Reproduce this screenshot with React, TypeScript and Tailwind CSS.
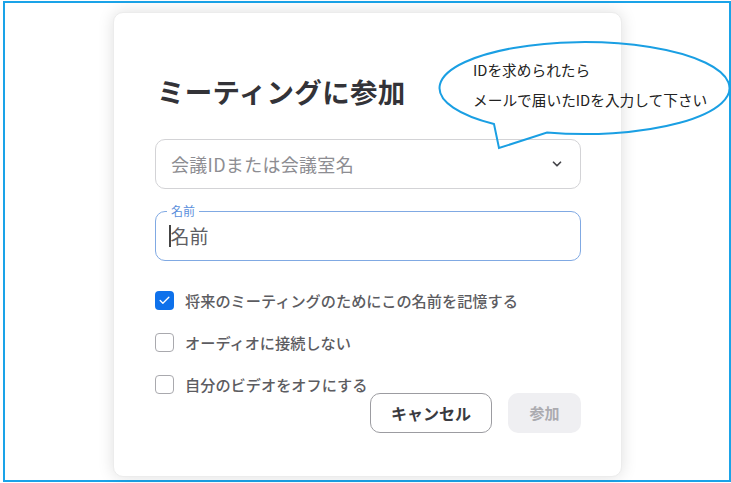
import { ChevronDown, Check } from "lucide-react"

const options = [
  { label: "将来のミーティングのためにこの名前を記憶する", checked: true },
  { label: "オーディオに接続しない", checked: false },
  { label: "自分のビデオをオフにする", checked: false },
]

export default function App() {
  return (
    <div
      className="relative w-[731px] h-[483px] bg-white overflow-hidden"
      style={{ fontFamily: '"Noto Sans CJK JP", "Noto Sans", sans-serif' }}
    >
      {/* blue frame around the screenshot */}
      <div className="ml-[3px] mt-[1px] w-[728px] h-[481px] border-2 border-[#1aa3e8] flex">
        {/* join dialog */}
        <div className="ml-[108px] mt-[9px] w-[509px] h-[465px] rounded-[10px] bg-white shadow-[0_0_16px_rgba(0,0,0,0.13)] border border-[#ececec] pl-[41px] pr-[40px] pt-[62px] flex flex-col">
          <h1 className="ml-[2px] text-[27.5px] leading-[32px] font-bold text-[#333338] tracking-[0.3px]">
            ミーティングに参加
          </h1>

          <div className="mt-[32px] h-[50px] rounded-[10px] border border-[#d3d3d6] flex items-center justify-between pl-[15px] pr-[16px]">
            <span className="text-[18px] tracking-[0.3px] text-[#8d8d92]">会議IDまたは会議室名</span>
            <ChevronDown size={14} strokeWidth={3} className="text-[#45454a]" />
          </div>

          <div className="relative mt-[22px] h-[50px] rounded-[10px] border-[1.5px] border-[#80a9e3] flex items-center pl-[13px]">
            <span className="absolute left-[11px] -top-[9px] bg-white px-[4px] text-[12px] leading-[16px] text-[#5b8fdc]">
              名前
            </span>
            <span className="w-[1.5px] h-[22px] bg-[#444]" />
            <span className="text-[19px] text-[#5e5e63]">名前</span>
          </div>

          <div className="mt-[29px] flex flex-col gap-[22px]">
            {options.map((o) => (
              <div key={o.label} className="h-[20px] flex items-center gap-[11px]">
                {o.checked ? (
                  <span className="w-[19px] h-[19px] rounded-[4px] bg-[#0e71eb] flex items-center justify-center">
                    <Check size={13} strokeWidth={2.5} className="text-white" />
                  </span>
                ) : (
                  <span className="w-[19px] h-[19px] rounded-[4px] border-[1.5px] border-[#a9a9ae] bg-white" />
                )}
                <span className="text-[15.2px] font-medium text-[#5c5c61]">{o.label}</span>
              </div>
            ))}
          </div>

          <div className="mt-[-1px] flex justify-end gap-[16px]">
            <button className="w-[122px] h-[40px] rounded-[10px] border-[1.5px] border-[#9c9ca1] bg-white text-[16px] font-bold text-[#3a3a3f]">
              キャンセル
            </button>
            <button className="w-[73px] h-[40px] rounded-[10px] bg-[#efeff2] text-[15px] font-bold text-[#ababb0]">
              参加
            </button>
          </div>
        </div>
      </div>

      {/* speech bubble annotation */}
      <svg className="absolute left-0 top-0 pointer-events-none" width="731" height="483">
        <path
          d="M494 124 A145 46 0 1 1 547 132.5 L499 148 Z"
          fill="none"
          stroke="#1a9fe3"
          strokeWidth="2"
        />
      </svg>
      <div className="absolute left-[473px] top-[61px] text-[14.7px] leading-[18px] text-[#222]">
        IDを求められたら
      </div>
      <div className="absolute left-[473px] top-[91px] text-[14.7px] leading-[18px] text-[#222]">
        メールで届いたIDを入力して下さい
      </div>
    </div>
  )
}
